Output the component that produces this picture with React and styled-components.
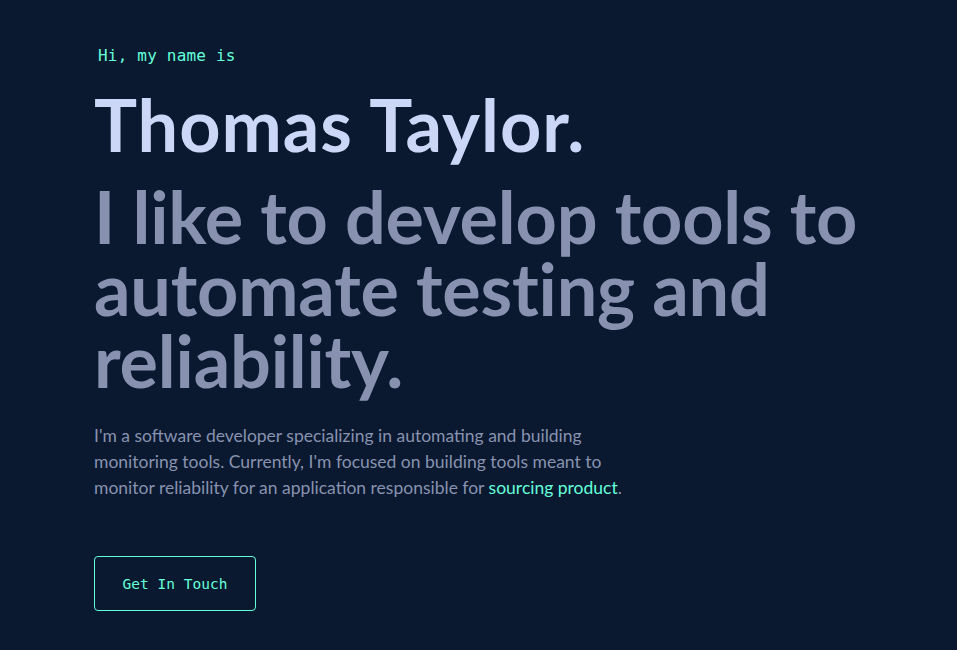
import React from 'react';
import styled, { createGlobalStyle } from 'styled-components';

const GlobalStyle = createGlobalStyle`
  html, body {
    margin: 0;
    padding: 0;
    background: #0a192f;
  }
  body {
    font-family: 'Lato', 'Liberation Sans', sans-serif;
    color: #8892b0;
  }
`;

const Hero = styled.section`
  display: flex;
  flex-direction: column;
  align-items: flex-start;
  min-height: 650px;
  box-sizing: border-box;
  padding: 46px 0 0 94px;
`;

const Intro = styled.h1`
  margin: 0 0 0 4px;
  color: #64ffda;
  font-family: 'DejaVu Sans Mono', 'Liberation Mono', monospace;
  font-size: 16px;
  font-weight: 400;
  line-height: 1.2;
  letter-spacing: 0.2px;
`;

const BigHeading = styled.h2`
  margin: ${(p) => p.$mt || 0} 0 0;
  color: ${(p) => p.$color};
  font-size: 72px;
  font-weight: 700;
  line-height: ${(p) => p.$lh};
  letter-spacing: ${(p) => p.$ls || 0};
`;

const Blurb = styled.p`
  margin: 27px 0 0;
  max-width: 560px;
  font-size: 17.5px;
  line-height: 26px;
  color: #8892b0;
`;

const Accent = styled.a`
  color: #64ffda;
  text-decoration: none;
`;

const Button = styled.a`
  margin-top: 55px;
  height: 55px;
  width: 162px;
  box-sizing: border-box;
  display: flex;
  align-items: center;
  justify-content: center;
  border: 1px solid #64ffda;
  border-radius: 4px;
  color: #64ffda;
  font-family: 'DejaVu Sans Mono', 'Liberation Mono', monospace;
  font-size: 14.5px;
  text-decoration: none;
`;

export default function App() {
  return (
    <>
      <GlobalStyle />
      <Hero>
        <Intro>Hi, my name is</Intro>
        <BigHeading $color="#ccd6f6" $lh="1.1" $mt="20px" $ls="1px">Thomas Taylor.</BigHeading>
        <BigHeading $color="#8892b0" $lh="72px" $mt="16px" $ls="-0.2px">
          I like to develop tools to automate testing and reliability.
        </BigHeading>
        <Blurb>
          I'm a software developer specializing in automating and building
          monitoring tools. Currently, I'm focused on building tools meant to
          monitor reliability for an application responsible for{' '}
          <Accent href="#">sourcing product</Accent>.
        </Blurb>
        <Button href="#">Get In Touch</Button>
      </Hero>
    </>
  );
}
